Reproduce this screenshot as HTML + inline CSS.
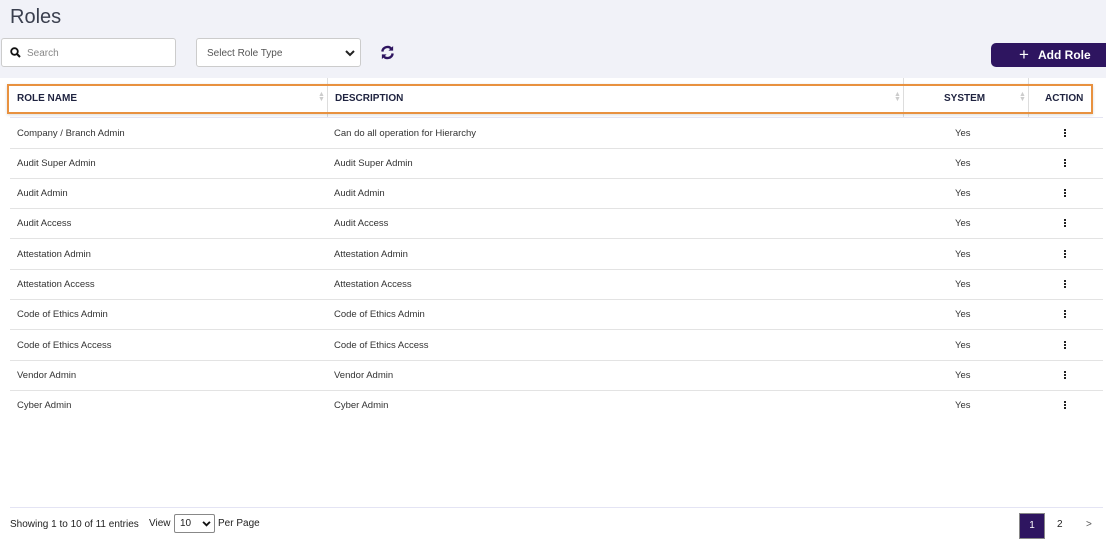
<!DOCTYPE html>
<html><head><style>
*{box-sizing:border-box;margin:0;padding:0}
body{width:1106px;height:547px;overflow:hidden;background:#fff;font-family:"Liberation Sans",sans-serif;color:#222;position:relative}
.top{position:absolute;left:0;top:0;width:1106px;height:78px;background:#f1f2f8}
.title{position:absolute;left:10px;top:6px;font-size:20px;color:#3a3f4e}
.search{position:absolute;left:1px;top:38px;width:175px;height:29px;background:#fff;border:1px solid #ccc;border-radius:3px}
.search span{position:absolute;left:25px;top:9px;font-size:10px;color:#888}
.sel{position:absolute;left:196px;top:38px;width:165px;height:29px;background:#fff;border:1px solid #ccc;border-radius:3px}
.sel span{position:absolute;left:10px;top:9px;font-size:10px;color:#555}
.btn{position:absolute;left:991px;top:43px;width:120px;height:24px;background:#2e1560;border-radius:5px;color:#fff;font-weight:bold;font-size:12px;line-height:24px;padding-left:28px}
.card{position:absolute;left:3px;top:78px;width:1103px;height:469px;background:#fff;border-radius:6px 0 0 0}
.hdr{position:absolute;left:7px;top:84px;width:1086px;height:30px;border:2px solid #e8913f;box-shadow:0 1px 3px rgba(0,0,0,.15)}
.vs{position:absolute;top:78px;height:40px;width:1px;background:#ddd}
.h{position:absolute;top:93px;font-size:10px;font-weight:bold;color:#1f2340}
.hl{position:absolute;left:10px;top:117px;width:1093px;height:1px;background:#e4e4f2}
.row{position:absolute;left:10px;width:1093px;height:30px;border-bottom:1px solid #e3e3e3;font-size:9.5px;color:#333}
.row span{position:absolute;top:9px}
.dots{position:absolute;left:1054px;top:10px;width:2px}
.dots i{display:block;width:2px;height:2px;background:#222;margin-bottom:1px}
.arr{position:absolute;top:92px;font-size:7px;color:#ccc;line-height:5px}
</style></head><body>
<div class="top"></div>
<div class="title">Roles</div>
<div class="search"><svg style="position:absolute;left:8px;top:8px" width="11" height="11" viewBox="0 0 11 11"><circle cx="4.5" cy="4.5" r="3.3" fill="none" stroke="#111" stroke-width="1.8"/><path d="M7 7l3 3" stroke="#111" stroke-width="2"/></svg><span>Search</span></div>
<div class="sel"><span>Select Role Type</span><svg style="position:absolute;left:148px;top:11px" width="10" height="7" viewBox="0 0 10 7"><path d="M1 1l4 4 4-4" fill="none" stroke="#222" stroke-width="2"/></svg></div>
<svg style="position:absolute;left:380px;top:45px" width="15" height="15" viewBox="0 0 16 16"><path d="M2.5 7A5.5 5.5 0 0 1 12.5 4.5" fill="none" stroke="#2e1560" stroke-width="2.5"/><path d="M14 1v5h-5z" fill="#2e1560"/><path d="M13.5 9A5.5 5.5 0 0 1 3.5 11.5" fill="none" stroke="#2e1560" stroke-width="2.5"/><path d="M2 15v-5h5z" fill="#2e1560"/></svg>
<div class="btn"><span style="position:absolute;left:28px;top:0px;font-size:17px;font-weight:normal">+</span><span style="margin-left:19px">Add Role</span></div>
<div class="card"></div>
<div class="vs" style="left:327px"></div><div class="vs" style="left:903px"></div><div class="vs" style="left:1028px"></div>
<div class="hdr"></div>
<div class="h" style="left:17px">ROLE NAME</div>
<div class="h" style="left:335px">DESCRIPTION</div>
<div class="h" style="left:944px">SYSTEM</div>
<div class="h" style="left:1045px">ACTION</div>
<div class="arr" style="left:318px">▲<br>▼</div><div class="arr" style="left:894px">▲<br>▼</div><div class="arr" style="left:1019px">▲<br>▼</div>
<div class="hl"></div>
<div class="row" style="top:119px"><span style="left:7px">Company / Branch Admin</span><span style="left:324px">Can do all operation for Hierarchy</span><span style="left:945px">Yes</span><div class="dots"><i></i><i></i><i></i></div></div>
<div class="row" style="top:149px"><span style="left:7px">Audit Super Admin</span><span style="left:324px">Audit Super Admin</span><span style="left:945px">Yes</span><div class="dots"><i></i><i></i><i></i></div></div>
<div class="row" style="top:179px"><span style="left:7px">Audit Admin</span><span style="left:324px">Audit Admin</span><span style="left:945px">Yes</span><div class="dots"><i></i><i></i><i></i></div></div>
<div class="row" style="top:209px"><span style="left:7px">Audit Access</span><span style="left:324px">Audit Access</span><span style="left:945px">Yes</span><div class="dots"><i></i><i></i><i></i></div></div>
<div class="row" style="top:240px"><span style="left:7px">Attestation Admin</span><span style="left:324px">Attestation Admin</span><span style="left:945px">Yes</span><div class="dots"><i></i><i></i><i></i></div></div>
<div class="row" style="top:270px"><span style="left:7px">Attestation Access</span><span style="left:324px">Attestation Access</span><span style="left:945px">Yes</span><div class="dots"><i></i><i></i><i></i></div></div>
<div class="row" style="top:300px"><span style="left:7px">Code of Ethics Admin</span><span style="left:324px">Code of Ethics Admin</span><span style="left:945px">Yes</span><div class="dots"><i></i><i></i><i></i></div></div>
<div class="row" style="top:331px"><span style="left:7px">Code of Ethics Access</span><span style="left:324px">Code of Ethics Access</span><span style="left:945px">Yes</span><div class="dots"><i></i><i></i><i></i></div></div>
<div class="row" style="top:361px"><span style="left:7px">Vendor Admin</span><span style="left:324px">Vendor Admin</span><span style="left:945px">Yes</span><div class="dots"><i></i><i></i><i></i></div></div>
<div class="row" style="top:391px;border-bottom:none"><span style="left:7px">Cyber Admin</span><span style="left:324px">Cyber Admin</span><span style="left:945px">Yes</span><div class="dots"><i></i><i></i><i></i></div></div>
<div style="position:absolute;left:10px;top:507px;width:1093px;height:1px;background:#e4e4f4"></div>
<div style="position:absolute;left:10px;top:519px;font-size:10px;color:#222">Showing 1 to 10 of 11 entries</div>
<div style="position:absolute;left:149px;top:518px;font-size:10px;color:#222">View</div>
<div style="position:absolute;left:174px;top:514px;width:41px;height:19px;border:1px solid #888;border-radius:2px;background:#fff;font-size:10px;padding:3px 0 0 5px">10<svg style="position:absolute;left:27px;top:6px" width="9" height="6" viewBox="0 0 10 7"><path d="M1 1l4 4 4-4" fill="none" stroke="#111" stroke-width="2.2"/></svg></div>
<div style="position:absolute;left:218px;top:518px;font-size:10px;color:#222">Per Page</div>
<div style="position:absolute;left:1019px;top:513px;width:26px;height:26px;background:#2e1560;border:1px solid #888;color:#fff;font-size:10px;text-align:center;line-height:24px">1</div>
<div style="position:absolute;left:1057px;top:519px;font-size:10px">2</div>
<div style="position:absolute;left:1086px;top:519px;font-size:10px;color:#555">&gt;</div>
</body></html>
